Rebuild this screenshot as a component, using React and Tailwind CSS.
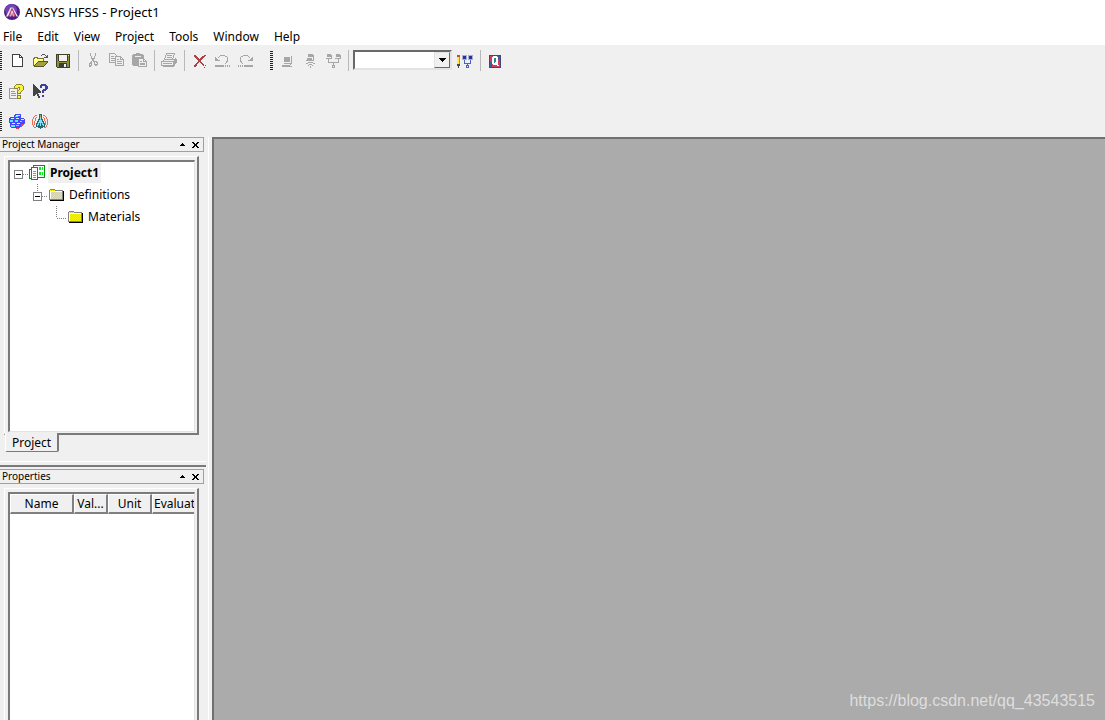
import React, { useState } from "react";

const Icon = ({ children }) => (
  <svg
    className="size-4 shrink-0"
    viewBox="0 0 16 16"
    fill="none"
    shapeRendering="crispEdges"
    aria-hidden="true"
  >
    {children}
  </svg>
);

const AppLogo = () => (
  <svg className="size-4 shrink-0" viewBox="0 0 16 16" aria-hidden="true">
    <circle cx="8" cy="8" r="8" fill="#4b1d86" />
    <circle cx="7" cy="6" r="6" fill="#7443b3" />
    <path d="M2 12.500L6.500 3.500h1.500L4 12.500z" fill="#f3e6ee" />
    <path d="M8 3.500h1L14 12.500h-1.500z" fill="#f3e6ee" />
    <path
      d="M5 12.500L8 5.500M8 12.500V7M11 12.500L8.500 6"
      stroke="#d7486a"
      strokeWidth="1.200"
    />
    <path d="M6.500 12.500L8 7M9.500 12.500L8.300 7" stroke="#f3e6ee" strokeWidth="0.900" fill="none" />
  </svg>
);

const NewIcon = () => (
  <Icon>
    <path d="M3.500 1.500H10.500L13.500 4.500V13.500H3.500z" fill="#fff" stroke="#404040" />
    <path d="M10.500 1.500V4.500H13.500" stroke="#404040" />
  </Icon>
);

const OpenIcon = () => (
  <Icon>
    <path d="M1 5h1V4h3v1h6v3H5v1H4v1H3v2H1z" fill="#ffff7a" />
    <path d="M2 6h1M4 6h1M6 6h1M8 6h1M3 7h1M5 7h1M2 8h1M4 8h1M3 5h1M2 10h1" stroke="#fff" />
    <path d="M1.500 13V5.500H2.500V4.500H5.500V5.500H11.500V8" stroke="#75753a" />
    <path d="M2 13h10l4-5H6z" fill="#a2a238" />
    <path d="M6 8.500h10M2 13.500h10M12 12.500h1M13 11.500h1M14 10.500h1M15 9.500h1M5 9.500h1M4 10.500h1M3 11.500h1M2 12.500h1" stroke="#55552b" />
    <path d="M9 2.500h1M10 1.500h3M13 2.500h1M14 3.500h1M15.500 2v3M12 4.500h3" stroke="#555" />
  </Icon>
);

const SaveIcon = () => (
  <Icon>
    <path d="M1 1h14v14H2v-1H1z" fill="#404028" />
    <path d="M2 2h12v12H2z" fill="#90903c" />
    <path d="M4 2h8v6H4z" fill="#f2f2f2" />
    <path d="M4 8.500h8M3.500 2v6M12.500 2v6" stroke="#404028" />
    <path d="M13 2h1v1h-1z" fill="#ddd" />
    <path d="M4 10h8v4H4z" fill="#3c3c3c" />
    <path d="M9 11h2v3H9z" fill="#f0f0f0" />
  </Icon>
);

const CutIcon = () => (
  <Icon>
    <path d="M5.500 0v3M6.500 3v3M7.500 5v3M10.500 0v3M9.500 3v3M8.500 5v3M8 8.500h1M6 8.500h1M10 8.500h1" stroke="#a6a6a6" />
    <path d="M4.500 10.500h1v-1h1v3h-1v1h-1zM9.500 8.500h2v1h1v2h-1v1h-1v-1h-1z" stroke="#a6a6a6" />
  </Icon>
);

const CopyIcon = () => (
  <Icon>
    <path d="M1.500 0.500H6.500L8.500 2.500V9.500H1.500z" stroke="#a6a6a6" />
    <path d="M3 3.500h3M3 5.500h4M3 7.500h4" stroke="#a6a6a6" />
    <path d="M7.500 3.500H12.500L15.500 6.500V12.500H7.500z" fill="#f0f0f0" stroke="#a6a6a6" />
    <path d="M12.500 4v2.500H15M9 6.500h2M9 8.500h5M9 10.500h5" stroke="#a6a6a6" />
  </Icon>
);

const PasteIcon = () => (
  <Icon>
    <path d="M2 1h3V0h4v1h3v1h1v11H2v-1H1V2h1z" fill="#a6a6a6" />
    <path d="M4 3.500h6" stroke="#eee" />
    <path d="M7.500 5.500H12.500L15.500 8.500V13.500H7.500z" fill="#f0f0f0" stroke="#a6a6a6" />
    <path d="M12.500 6v2.500H15M9 8.500h2M9 10.500h5M9 11.500h5" stroke="#a6a6a6" />
  </Icon>
);

const PrintIcon = () => (
  <Icon>
    <path d="M5.500 0.500H13.500L11.500 6.500H3.500z" stroke="#a6a6a6" />
    <path d="M6 2.500h5M6 4.500h5" stroke="#a6a6a6" />
    <path d="M2.500 6.500H13.500M0.500 8.500H12.500V12.500H0.500zM1.500 7.500h1M14.500 5v6M13.500 6v7M15.500 6v4M2 13.500h11" stroke="#a6a6a6" />
    <path d="M2 10.500h9" stroke="#a6a6a6" />
  </Icon>
);

const DeleteIcon = () => (
  <Icon>
    <path
      d="M3 2h2v1h1v1h1v1h1v1h1V5h1V4h1V3h2V2h2v1h-1v1h-1v1h-1v1h-1v1h-1v2h1v1h1v1h1v2h-1v-1h-1v-1h-1v-1H9V9H8v1H7v1H6v2H5v1H3v-2h1v-1h1v-1h1V9h1V7H6V6H5V5H4V4H3zM14 12h1v1h-1zM13 14h1v1h-1z"
      fill="#a84444"
    />
  </Icon>
);

const UndoShape = () => (
  <>
    <path d="M5 3.500h1M6 2.500h5M11 3.500h2M13.500 4v5M12.500 8v2M11 10.500h1M4 4.500h1" stroke="#a6a6a6" />
    <path d="M1 4h1v1h1v1h1v1h2v1H1z" fill="#a6a6a6" />
    <path d="M1 12h9v2H1zM11 12h1v2h-1zM13 12h1v2h-1zM15 12h1v2h-1z" fill="#a6a6a6" />
  </>
);

const UndoIcon = () => (
  <Icon>
    <UndoShape />
  </Icon>
);

const RedoIcon = () => (
  <Icon>
    <g transform="matrix(-1 0 0 1 17 0)">
      <UndoShape />
    </g>
  </Icon>
);

const LocalIcon = () => (
  <Icon>
    <path d="M5 4h6v5H5z" fill="#a6a6a6" />
    <path d="M12.500 3v8M5 10.500h8M3 12.500h8M3 13.500h10M11 11.500h1" stroke="#a6a6a6" />
  </Icon>
);

const RemoteIcon = () => (
  <Icon>
    <path d="M6 1h5v3H6zM5 5h5v2H5z" fill="#a6a6a6" />
    <path d="M11.500 2v5M4 7.500h8M6 9.500h5M4 10.500h2M11 10.500h2M7 11.500h3M6 12.500h1M10 12.500h1M8 13.500h1M8 14.500h1" stroke="#a6a6a6" />
  </Icon>
);

const NetworkIcon = () => (
  <Icon>
    <path d="M2 1h4v3H2zM11 1h4v3h-4z" fill="#a6a6a6" />
    <path d="M6.500 2v4M1 5.500h6M15.500 2v4M10 5.500h6M3.500 6v3M13.500 6v3M3 9.500h11M8.500 10v2M7.500 12.500h2v2h-2z" stroke="#a6a6a6" />
  </Icon>
);

const EditQueueIcon = () => (
  <Icon>
    <path d="M0 3h3v8H0z" fill="#ffee32" />
    <path d="M0 2h3v2H0z" fill="#e33b3b" />
    <path d="M2.500 4v8" stroke="#b89b2b" />
    <path d="M0 11h3v2H2v2H1v-2H0z" fill="#464646" />
    <path d="M5 2h5v5H5zM11 2h5v5h-5z" fill="#a8b0cf" />
    <path d="M6 3h3v3H6zM12 3h3v3h-3z" fill="#2931a2" />
    <path d="M7.500 7v3M13.500 7v3M7 10.500h7M10.500 11v2M9.500 12.500h2v2h-2z" stroke="#4d62bd" />
  </Icon>
);

const QueueIcon = () => (
  <Icon>
    <path d="M2 2h12v13H2z" fill="#454579" />
    <path d="M3 3h10v11H3z" fill="#c83e5b" />
    <path d="M3 9h2v5H3zM11 3h2v4h-2z" fill="#3e5aa4" />
    <path d="M6 3h4v1h1v7h-1v1H6v-1H5V4h1z" fill="#fff" />
    <path d="M7 5h2v5H7z" fill="#25878d" />
    <path d="M8 9h1v1h1v1h1v1h1v1h-2v-1H9v-1H8z" fill="#fff" />
  </Icon>
);

const HelpIcon = () => (
  <Icon>
    <path d="M0.500 4.500H8.500V14.500H0.500z" fill="#f2f2f2" stroke="#999" />
    <path d="M2 7.500h4M2 9.500h5M2 11.500h5" stroke="#999" />
    <path d="M7 0h6v1h1v1h1v4h-1v1h-1v1h-1v2H8V7h1V6h1V4H9v1H5V2h1V1h1zM8 11h4v4H8z" fill="#8b852d" />
    <path d="M7 1h6v1h1v4h-1v1h-1v1h-1v1H9V7h1V6h1V3H9v1H6V2h1zM9 12h2v2H9z" fill="#fff43c" />
  </Icon>
);

const ContextHelpIcon = () => (
  <Icon>
    <path d="M1 0h1v1h1v1h1v1h1v1h1v1h1v1h1v1h1v2H6v1h1v2h1v2H6v-2H5v-2H4v1H3v1H1z" fill="#444" />
    <path d="M9 0h5v1h1v1h1v3h-1v1h-1v1h-2v2h-2V6h1V5h2V2h-3v2H8V1h1zM10 11h2v2h-2z" fill="#3f3fa5" />
  </Icon>
);

const CubesIcon = () => (
  <Icon>
    <path d="M7 13h2v-1h3v-2h2V8h2v2h-1v1h-1v1h-1v1h-2v1h-1v1H7z" fill="#ef3d4b" />
    <path d="M6 0h6v4h3v1h1v4h-1v1h-3v3h-1v1H2v-1H1V9H0V4h1V3h4V1h1z" fill="#4448f6" />
    <path d="M7 1h4v1H7zM2 4h3v1H2zM7 4h3v1H7zM12 5h3v1h-3zM3 9h3v1H3zM8 9h3v1H8z" fill="#d9ecff" />
    <path d="M6 2h3v1H6zM1 6h3v2H1zM6 6h3v2H6zM11 7h2v1h-2zM2 11h4v2H2zM7 11h3v1H7z" fill="#56e8ff" />
  </Icon>
);

const RadiationIcon = () => (
  <Icon>
    <path d="M3 1.500h2M2 2.500h1M1.500 3v2M0.500 5v6M1.500 11v2M2 13.500h2M4 3.500h1M3.500 4v3M2.500 7v4M11 1.500h2M13 2.500h1M14.500 3v2M15.500 5v6M14.500 11v2M12 13.500h2M11 3.500h1M12.500 4v3M13.500 7v4" stroke="#f06a52" />
    <path d="M7 0h3v5h1v2h1v2h1v4h-2v1H9v1H8v-1H6v-1H4V9h1V7h1V5h1z" fill="#2d6670" />
    <path d="M8 2h1v10H8zM7 6h1v3H7zM6 8h1v3H6zM9 6h1v3H9zM10 8h1v3h-1zM5 10h1v2H5zM11 10h1v2h-1z" fill="#7de4f1" />
    <path d="M8 1h1v2H8z" fill="#b49a45" />
  </Icon>
);

const ProjectIcon = () => (
  <Icon>
    <path d="M4 0h12v13H4z" fill="#009a00" />
    <path d="M5 1h10v11H5z" fill="#fff" />
    <path d="M10 2h2v3h-2zM13 2h1v3h-1zM10 7h2v3h-2zM13 7h1v3h-1z" fill="#00ee22" />
    <path d="M2 2h7v13H2v-1H0V4h2z" fill="#009a00" />
    <path d="M3 3h5v11H3zM1 5h1v8H1z" fill="#fff" />
    <path d="M4 6h3v1H4zM4 8h3v1H4zM4 10h3v1H4zM4 12h3v1H4z" fill="#00ee22" />
  </Icon>
);

const FolderIcon = () => (
  <Icon>
    <path d="M2 13.500h14M15.500 4v10" stroke="#000" />
    <path d="M1.500 12.500V3.500L2.500 2.500H6.500L7.500 3.500H14.500V12.500z" fill="#f4f410" stroke="#808080" />
    <path
      d="M3 3.500h4M2 5.500h12M2 7.500h12M2 9.500h12M2 11.500h12"
      stroke="#d0d0b0"
      strokeDasharray="1 1"
    />
    <path
      d="M3 6.500h11M3 8.500h11M3 10.500h11"
      stroke="#d0d0b0"
      strokeDasharray="1 1"
    />
    <path d="M2 4.500h12M2.500 5v7" stroke="#fffff0" />
  </Icon>
);

const ToolButton = ({ label, icon: Glyph, disabled }) => (
  <button
    type="button"
    aria-label={label}
    disabled={disabled}
    className="flex h-full w-[23px] shrink-0 items-start pl-[3px] pt-2"
  >
    <Glyph />
  </button>
);

const Separator = () => (
  <div className="flex w-[7px] shrink-0 justify-center py-[5px]">
    <div className="w-px bg-[#b8b8b8]" />
  </div>
);

const Grip = () => (
  <div className="my-[6px] w-[3px] shrink-0 bg-[repeating-linear-gradient(to_bottom,#222_0px,#222_1px,#f0f0f0_1px,#f0f0f0_2px)]" />
);

const menus = ["File", "Edit", "View", "Project", "Tools", "Window", "Help"];

const MenuBar = () => (
  <nav className="flex h-[21px] items-end gap-[15px] bg-white pl-[3px]">
    {menus.map((menu) => (
      <button key={menu} type="button" className="text-[12px] leading-4">
        {menu}
      </button>
    ))}
  </nav>
);

const Toolbars = () => {
  const [machine, setMachine] = useState("");

  return (
    <div>
      <div className="flex h-[31px]">
        <div className="-ml-px flex gap-1">
          <Grip />
          <div className="flex">
            <ToolButton label="New" icon={NewIcon} />
            <ToolButton label="Open" icon={OpenIcon} />
            <ToolButton label="Save" icon={SaveIcon} />
            <Separator />
            <ToolButton label="Cut" icon={CutIcon} disabled />
            <ToolButton label="Copy" icon={CopyIcon} disabled />
            <ToolButton label="Paste" icon={PasteIcon} disabled />
            <Separator />
            <ToolButton label="Print" icon={PrintIcon} disabled />
            <Separator />
            <ToolButton label="Delete" icon={DeleteIcon} />
            <ToolButton label="Undo" icon={UndoIcon} disabled />
            <ToolButton label="Redo" icon={RedoIcon} disabled />
          </div>
        </div>
        <div className="ml-[13px] flex gap-[3px]">
          <Grip />
          <div className="flex">
            <ToolButton label="Local machine" icon={LocalIcon} disabled />
            <ToolButton label="Remote machine" icon={RemoteIcon} disabled />
            <ToolButton label="Distributed machines" icon={NetworkIcon} disabled />
            <Separator />
            <div className="relative ml-px mr-[2px] mt-[5px] flex h-5 w-[99px] border-2 border-b-[#e3e3e3] border-l-[#696969] border-r-[#e3e3e3] border-t-[#696969] bg-white">
              <select
                aria-label="Machine configuration"
                value={machine}
                onChange={(e) => setMachine(e.target.value)}
                className="w-full appearance-none bg-white text-[12px] focus:outline-none"
              >
                <option value=""></option>
              </select>
              <span className="pointer-events-none absolute inset-y-0 right-0 flex w-4 items-center justify-center border border-b-[#696969] border-l-[#e3e3e3] border-r-[#696969] border-t-[#e3e3e3] bg-[#f0f0f0]">
                <svg className="h-1 w-[7px]" viewBox="0 0 7 4" shapeRendering="crispEdges">
                  <path d="M0 0h7v1H6v1H5v1H4v1H3V3H2V2H1V1H0z" fill="#000" />
                </svg>
              </span>
            </div>
            <ToolButton label="Edit machines" icon={EditQueueIcon} />
            <Separator />
            <ToolButton label="Queue" icon={QueueIcon} />
          </div>
        </div>
      </div>
      <div className="-ml-px flex h-[30px] gap-1">
        <Grip />
        <div className="flex">
          <ToolButton label="Help topics" icon={HelpIcon} />
          <ToolButton label="Context help" icon={ContextHelpIcon} />
        </div>
      </div>
      <div className="-ml-px flex h-[31px] gap-1">
        <Grip />
        <div className="flex">
          <ToolButton label="Mesh" icon={CubesIcon} />
          <ToolButton label="Radiation" icon={RadiationIcon} />
        </div>
      </div>
    </div>
  );
};

const PanelHeader = ({ title }) => (
  <div className="mr-[2px] flex h-[15px] shrink-0 items-center border-y border-r border-[#a0a0a0] pl-[2px] pr-1">
    <h2 className="grow self-start text-[10px] leading-3">{title}</h2>
    <button type="button" aria-label={`Collapse ${title}`} className="px-[5px]">
      <svg className="h-[3px] w-[5px]" viewBox="0 0 5 3" shapeRendering="crispEdges">
        <path d="M2 0h1v1h1v1h1v1H0V2h1V1h1z" fill="#000" />
      </svg>
    </button>
    <button type="button" aria-label={`Close ${title}`} className="pl-[2px]">
      <svg className="h-[6px] w-[7px]" viewBox="0 0 7 6" shapeRendering="crispEdges">
        <path
          d="M0 0h2v1h1v1h1V1h1V0h2v1H6v1H5v2h1v1h1v1H5V5H4V4H3v1H2v1H0V5h1V4h1V2H1V1H0z"
          fill="#000"
        />
      </svg>
    </button>
  </div>
);

// sunken white box inside a raised one, `open` drops the bottom edges
const Frame = ({ children, open }) => (
  <div
    className={`ml-1 mr-[7px] mt-1 flex min-h-0 grow border-l border-r-2 border-t border-l-white border-r-[#7a7a7a] border-t-white pl-[3px] pr-[2px] pt-[3px] ${
      open ? "" : "border-b-2 border-b-[#7a7a7a] pb-px"
    }`}
  >
    <div
      className={`min-w-0 grow overflow-hidden border-l-2 border-r border-t-2 border-l-[#7a7a7a] border-r-[#e3e3e3] border-t-[#7a7a7a] bg-white ${
        open ? "" : "border-b border-b-[#e3e3e3]"
      }`}
    >
      {children}
    </div>
  </div>
);

const Branch = ({ expander, up }) => (
  <svg
    className="h-[22px] w-[19px] shrink-0"
    viewBox="0 0 19 22"
    fill="none"
    shapeRendering="crispEdges"
    aria-hidden="true"
  >
    {up && <path d="M8.500 0V12" stroke="#808080" strokeDasharray="1 1" />}
    <path d="M9 12.500H19" stroke="#808080" strokeDasharray="1 1" />
    {expander && (
      <>
        <path d="M4.500 8.500h8v8h-8z" fill="#fff" stroke="#808080" />
        <path d="M6 12.500h5" stroke="#000" />
      </>
    )}
  </svg>
);

const TreeRow = ({ children }) => (
  <div className="flex h-[22px] items-center">{children}</div>
);

const ProjectTree = () => (
  <ul className="text-[12px] leading-5">
    <li>
      <TreeRow>
        <Branch expander />
        <ProjectIcon />
        <span className="ml-[3px] bg-[#f0f0f0] px-[2px] font-bold">Project1</span>
      </TreeRow>
      <ul className="pl-[19px]">
        <li>
          <TreeRow>
            <Branch expander up />
            <FolderIcon />
            <span className="ml-[3px] px-[2px]">Definitions</span>
          </TreeRow>
          <ul className="pl-[19px]">
            <li>
              <TreeRow>
                <Branch up />
                <FolderIcon />
                <span className="ml-[3px] px-[2px]">Materials</span>
              </TreeRow>
            </li>
          </ul>
        </li>
      </ul>
    </li>
  </ul>
);

const headCell =
  "h-5 overflow-hidden whitespace-nowrap border-b-2 border-r-2 border-l border-t border-b-[#808080] border-r-[#808080] border-l-white border-t-white bg-[#f0f0f0] p-0 pt-px font-normal";

const PropertiesTable = () => (
  <table className="w-[204px] table-fixed border-separate border-spacing-0 text-[12px] leading-4">
    <colgroup>
      <col className="w-[64px]" />
      <col className="w-[34px]" />
      <col className="w-[44px]" />
      <col />
    </colgroup>
    <thead>
      <tr>
        <th className={headCell}>Name</th>
        <th className={headCell}>Val...</th>
        <th className={headCell}>Unit</th>
        <th className={`${headCell} pl-px text-left`}>Evaluated</th>
      </tr>
    </thead>
  </table>
);

const App = () => {
  return (
    <div className="flex h-screen flex-col overflow-hidden bg-[#f0f0f0] font-['Noto_Sans','Open_Sans',sans-serif] text-black">
      <header className="flex h-6 shrink-0 items-center gap-[5px] bg-white pb-px pl-1">
        <AppLogo />
        <h1 className="text-[13px] leading-4">ANSYS HFSS - Project1</h1>
      </header>
      <MenuBar />
      <Toolbars />

      <div className="flex min-h-0 grow">
        <aside className="grid w-[209px] shrink-0 grid-cols-1 grid-rows-[330fr_253fr] border-r border-white">
          <section className="mr-[2px] flex min-h-0 flex-col border-b-2 border-[#7a7a7a]">
            <PanelHeader title="Project Manager" />
            <Frame>
              <ProjectTree />
            </Frame>
            <div className="z-10 -mt-[2px] mb-[9px] flex pl-[5px]">
              <button
                type="button"
                className="h-[19px] rounded-b-xs border-b border-l border-r-2 border-b-[#7a7a7a] border-l-white border-r-[#7a7a7a] bg-[#f0f0f0] px-[6px] pt-[2px] text-[12px] leading-4"
              >
                Project
              </button>
            </div>
            <div className="mb-[3px] h-px shrink-0 bg-white" />
          </section>
          <section className="mr-[2px] flex min-h-0 flex-col pt-[2px]">
            <PanelHeader title="Properties" />
            <Frame open>
              <PropertiesTable />
            </Frame>
          </section>
        </aside>

        <main className="ml-[3px] flex grow items-end justify-end border-l-2 border-t-2 border-[#707070] bg-[#ababab] pb-[9px] pr-[10px]">
          <a
            href="https://blog.csdn.net/qq_43543515"
            className="font-['Liberation_Sans',Arial,sans-serif] text-[16px] leading-5 text-[#dedede]"
          >
            https://blog.csdn.net/qq_43543515
          </a>
        </main>
      </div>
    </div>
  );
};

export default App;
